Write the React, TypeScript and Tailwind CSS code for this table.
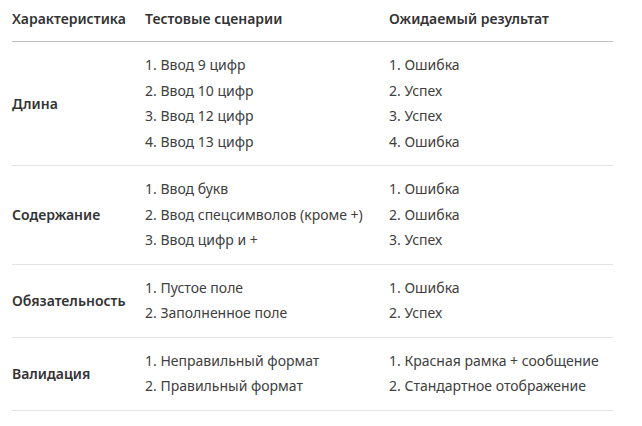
import React from "react";

interface Row {
  label: string;
  scenarios: string[];
  results: string[];
}

const rows: Row[] = [
  {
    label: "Длина",
    scenarios: ["Ввод 9 цифр", "Ввод 10 цифр", "Ввод 12 цифр", "Ввод 13 цифр"],
    results: ["Ошибка", "Успех", "Успех", "Ошибка"],
  },
  {
    label: "Содержание",
    scenarios: ["Ввод букв", "Ввод спецсимволов (кроме +)", "Ввод цифр и +"],
    results: ["Ошибка", "Ошибка", "Успех"],
  },
  {
    label: "Обязательность",
    scenarios: ["Пустое поле", "Заполненное поле"],
    results: ["Ошибка", "Успех"],
  },
  {
    label: "Валидация",
    scenarios: ["Неправильный формат", "Правильный формат"],
    results: ["Красная рамка + сообщение", "Стандартное отображение"],
  },
];

const List = ({ items }: { items: string[] }) => (
  <div className="flex flex-col">
    {items.map((t, i) => (
      <div key={i} className="leading-[25.5px] whitespace-nowrap">
        {i + 1}. {t}
      </div>
    ))}
  </div>
);

export default function App() {
  return (
    <div className="bg-white w-[642px] h-[426px] px-3 font-['Noto_Sans',sans-serif] text-[14px] text-[#404040]">
      <div className="w-[601px]">
        <div className="grid grid-cols-[133px_244px_224px] pt-[8px] pb-[12px] border-b border-[#bdbdbd] font-semibold text-[#333] leading-[21px]">
          <div>Характеристика</div>
          <div>Тестовые сценарии</div>
          <div>Ожидаемый результат</div>
        </div>
        {rows.map((r) => (
          <div
            key={r.label}
            className="grid grid-cols-[133px_244px_224px] pt-[10px] pb-[11px] border-b border-[#e3e3e3]"
          >
            <div className="flex items-center font-semibold text-[#333]">{r.label}</div>
            <List items={r.scenarios} />
            <List items={r.results} />
          </div>
        ))}
      </div>
    </div>
  );
}
